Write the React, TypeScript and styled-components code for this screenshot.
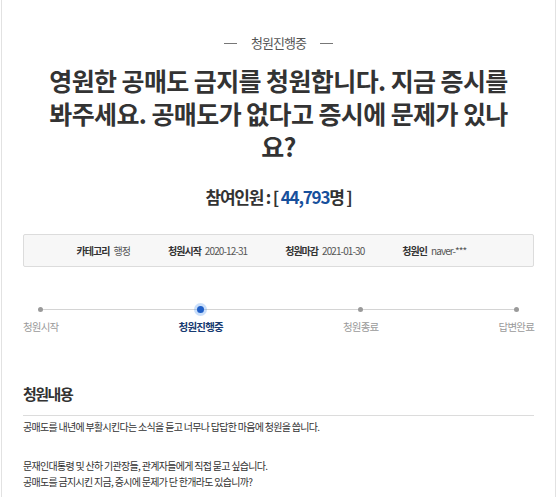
import styled, { createGlobalStyle } from 'styled-components'

const GlobalStyle = createGlobalStyle`
  html, body {
    margin: 0;
    padding: 0;
    background: #fff;
  }
  body {
    font-family: "Noto Sans CJK KR", "Noto Sans", sans-serif;
    color: #333;
  }
`

const steps = ['청원시작', '청원진행중', '청원종료', '답변완료']
const activeStep = 1

const info = [
  { label: '카테고리', value: '행정' },
  { label: '청원시작', value: '2020-12-31' },
  { label: '청원마감', value: '2021-01-30' },
  { label: '청원인', value: 'naver-***' },
]

const App = () => {
  return (
    <>
      <GlobalStyle />
      <Page>
        <Status>청원진행중</Status>
        <Title>영원한 공매도 금지를 청원합니다. 지금 증시를 봐주세요. 공매도가 없다고 증시에 문제가 있나요?</Title>
        <Count>
          참여인원 : [ <Num>44,793</Num>명 ]
        </Count>
        <InfoBox>
          {info.map(item => (
            <InfoItem key={item.label}>
              <InfoLabel>{item.label}</InfoLabel>
              <InfoValue>{item.value}</InfoValue>
            </InfoItem>
          ))}
        </InfoBox>
        <Progress>
          <Track />
          {steps.map((s, i) => (
            <Step key={s}>
              <Dot active={i === activeStep} />
              <StepLabel active={i === activeStep}>{s}</StepLabel>
            </Step>
          ))}
        </Progress>
        <SectionTitle>청원내용</SectionTitle>
        <Body>
          <p>공매도를 내년에 부활시킨다는 소식을 듣고 너무나 답답한 마음에 청원을 씁니다.</p>
          <Gap />
          <p>문재인대통령 및 산하 기관장들, 관계자들에게 직접 묻고 싶습니다.</p>
          <p>공매도를 금지시킨 지금, 증시에 문제가 단 한개라도 있습니까?</p>
        </Body>
      </Page>
    </>
  )
}

const Page = styled.div`
  width: 511px;
  height: 465px;
  box-sizing: content-box;
  margin-left: 1px;
  padding: 32px 21px 0;
  border-left: 1px solid #e2e2e2;
  border-right: 1px solid #e2e2e2;
  display: flex;
  flex-direction: column;
  align-items: center;
  overflow: hidden;
`

const Status = styled.div`
  display: flex;
  align-items: center;
  gap: 14px;
  font-size: 13px;
  letter-spacing: -1px;
  color: #555;
  line-height: 22px;
  &::before,
  &::after {
    content: '';
    width: 13px;
    height: 1px;
    background: #777;
  }
`

const Title = styled.h1`
  width: 466px;
  margin: 10px 0 0;
  text-align: center;
  font-size: 25px;
  font-weight: 700;
  letter-spacing: -0.6px;
  line-height: 33px;
  color: #333;
`

const Count = styled.div`
  margin-top: 22px;
  font-size: 17px;
  font-weight: 700;
  letter-spacing: -1.2px;
  color: #333;
  line-height: 24px;
`

const Num = styled.span`
  color: #17509c;
`

const InfoBox = styled.div`
  align-self: stretch;
  margin-top: 25px;
  height: 31px;
  background: #f7f7f7;
  border: 1px solid #dcdcdc;
  border-radius: 2px;
  display: flex;
  align-items: center;
  justify-content: center;
  gap: 38px;
  padding-right: 14px;
`

const InfoItem = styled.div`
  display: flex;
  align-items: center;
  gap: 4px;
  font-size: 10px;
  letter-spacing: -1px;
`

const InfoLabel = styled.span`
  font-weight: 700;
  color: #333;
`

const InfoValue = styled.span`
  color: #555;
  font-size: 10px;
  letter-spacing: -0.9px;
`

const Progress = styled.div`
  position: relative;
  align-self: stretch;
  margin-top: 37px;
  display: flex;
  justify-content: space-between;
`

const Track = styled.div`
  position: absolute;
  top: 5px;
  left: 16px;
  right: 18px;
  height: 1px;
  background: #d4d4d4;
`

const Step = styled.div`
  position: relative;
  display: flex;
  flex-direction: column;
  align-items: center;
`

const Dot = styled.span<{ active?: boolean }>`
  width: ${p => (p.active ? '7px' : '5px')};
  height: ${p => (p.active ? '7px' : '5px')};
  margin: ${p => (p.active ? '2px 0' : '3px 0')};
  border-radius: 50%;
  background: ${p => (p.active ? '#1f5fc8' : '#9a9a9a')};
  box-shadow: ${p => (p.active ? '0 0 0 3px rgba(80, 150, 240, 0.3)' : 'none')};
`

const StepLabel = styled.span<{ active?: boolean }>`
  margin-top: 5px;
  font-size: 10.5px;
  letter-spacing: -0.8px;
  line-height: 14px;
  font-weight: ${p => (p.active ? 700 : 400)};
  color: ${p => (p.active ? '#173a70' : '#9a9a9a')};
`

const SectionTitle = styled.h2`
  align-self: stretch;
  margin: 50px 0 0;
  padding-bottom: 11px;
  border-bottom: 1px solid #dcdcdc;
  font-size: 15px;
  font-weight: 700;
  letter-spacing: -1.5px;
  line-height: 20px;
  color: #333;
`

const Body = styled.div`
  align-self: stretch;
  margin-top: 3px;
  font-size: 10px;
  letter-spacing: -0.7px;
  line-height: 16px;
  color: #333;
  p {
    margin: 0;
  }
`

const Gap = styled.div`
  height: 23px;
`

export default App
